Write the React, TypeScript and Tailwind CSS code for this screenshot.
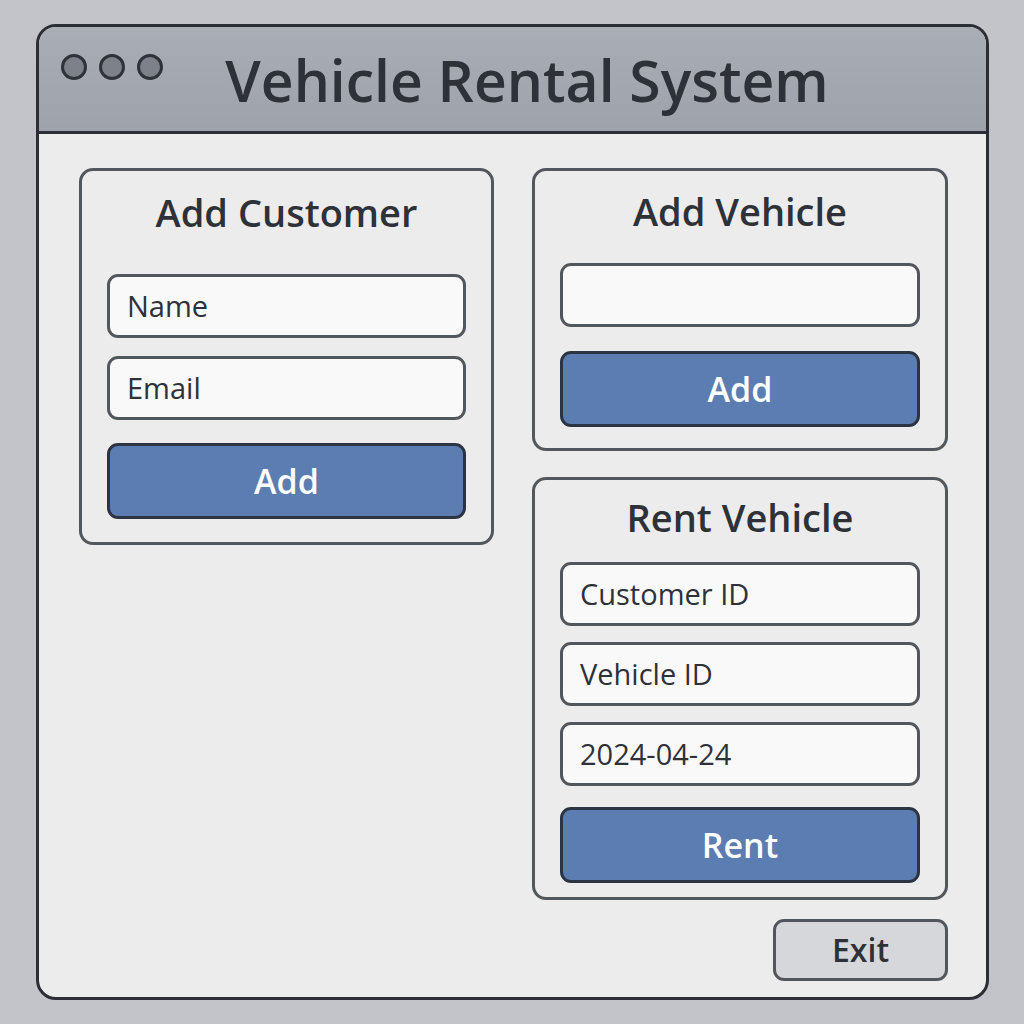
export default function App() {
  const font = { fontFamily: '"Open Sans", "Noto Sans", sans-serif' };

  return (
    <div className="w-[1024px] h-[1024px] bg-[#c2c4ca] pt-[24px] pl-[36px]" style={font}>
      {/* Window */}
      <div className="w-[953px] h-[976px] border-[3px] border-[#2b2e35] rounded-[20px] overflow-hidden flex flex-col bg-[#ececec]">
        {/* Title bar */}
        <div className="h-[107px] shrink-0 border-b-[3px] border-[#2b2e35] bg-gradient-to-b from-[#a9adb5] to-[#9ea2aa] flex items-center pl-[22px] pr-[95px]">
          <div className="self-start mt-[27px] flex gap-[12px]">
            <div className="w-[26px] h-[26px] rounded-full border-[3px] border-[#2f3238] bg-[#7d8189]" />
            <div className="w-[26px] h-[26px] rounded-full border-[3px] border-[#2f3238] bg-[#7d8189]" />
            <div className="w-[26px] h-[26px] rounded-full border-[3px] border-[#2f3238] bg-[#7d8189]" />
          </div>
          <h1 className="flex-1 text-center text-[57px] leading-[60px] font-semibold text-[#2e3138] mt-[2px]">
            Vehicle Rental System
          </h1>
        </div>

        {/* Body */}
        <div className="flex-1 pt-[34px] pl-[40px] pr-[38px]">
          <div className="grid grid-cols-[415px_416px] gap-x-[38px] items-start">
            {/* Add Customer */}
            <div className="border-[3px] border-[#52565d] rounded-[14px] px-[25px] pt-[21px] pb-[23px]">
              <h2 className="text-center text-[38px] leading-[40px] font-semibold text-[#2e3138] mb-[42px]">Add Customer</h2>
              <div className="flex flex-col gap-[18px]">
                <Field label="Name" />
                <Field label="Email" />
                <div className="mt-[5px]">
                  <Button label="Add" />
                </div>
              </div>
            </div>

            {/* Right column */}
            <div className="flex flex-col gap-[26px]">
              <div className="border-[3px] border-[#52565d] rounded-[14px] px-[25px] pt-[20px] pb-[21px]">
                <h2 className="text-center text-[38px] leading-[40px] font-semibold text-[#2e3138] mb-[32px]">Add Vehicle</h2>
                <div className="flex flex-col gap-[24px]">
                  <Field label="" />
                  <Button label="Add" />
                </div>
              </div>

              <div className="border-[3px] border-[#52565d] rounded-[14px] px-[25px] pt-[17px] pb-[14px]">
                <h2 className="text-center text-[38px] leading-[40px] font-semibold text-[#2e3138] mb-[25px]">Rent Vehicle</h2>
                <div className="flex flex-col gap-[16px]">
                  <Field label="Customer ID" />
                  <Field label="Vehicle ID" />
                  <Field label="2024-04-24" />
                  <div className="mt-[5px]">
                    <Button label="Rent" />
                  </div>
                </div>
              </div>
            </div>
          </div>

          {/* Footer */}
          <div className="flex justify-end mt-[19px]">
            <button className="w-[175px] h-[62px] border-[3px] border-[#52565d] rounded-[11px] bg-[#d6d7da] text-[32px] font-semibold text-[#2e3138] flex items-center justify-center">
              Exit
            </button>
          </div>
        </div>
      </div>
    </div>
  );
}

function Field({ label }: { label: string }) {
  return (
    <div className="h-[64px] border-[3px] border-[#52565d] rounded-[11px] bg-[#f9f9f9] flex items-center pl-[17px] text-[29px] font-medium text-[#2e3138]">
      {label}
    </div>
  );
}

function Button({ label }: { label: string }) {
  return (
    <button className="w-full h-[76px] border-[3px] border-[#2c3443] rounded-[11px] bg-[#5b7db2] text-white text-[34px] font-semibold flex items-center justify-center">
      {label}
    </button>
  );
}
